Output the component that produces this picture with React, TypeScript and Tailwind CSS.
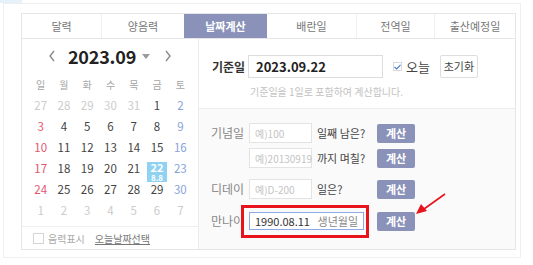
import React from "react";

const tabs = [
  { label: "달력", w: "w-[79px]" },
  { label: "양음력", w: "w-[83px]" },
  { label: "날짜계산", w: "w-[83px]", active: true },
  { label: "배란일", w: "w-[89px]" },
  { label: "전역일", w: "w-[78px]" },
  { label: "출산예정일", w: "w-[81px]" },
];

type Day = { d: number; o?: boolean; sel?: boolean };
const weeks: Day[][] = [
  [{ d: 27, o: true }, { d: 28, o: true }, { d: 29, o: true }, { d: 30, o: true }, { d: 31, o: true }, { d: 1 }, { d: 2 }],
  [{ d: 3 }, { d: 4 }, { d: 5 }, { d: 6 }, { d: 7 }, { d: 8 }, { d: 9 }],
  [{ d: 10 }, { d: 11 }, { d: 12 }, { d: 13 }, { d: 14 }, { d: 15 }, { d: 16 }],
  [{ d: 17 }, { d: 18 }, { d: 19 }, { d: 20 }, { d: 21 }, { d: 22, sel: true }, { d: 23 }],
  [{ d: 24 }, { d: 25 }, { d: 26 }, { d: 27 }, { d: 28 }, { d: 29 }, { d: 30 }],
  [{ d: 1, o: true }, { d: 2, o: true }, { d: 3, o: true }, { d: 4, o: true }, { d: 5, o: true }, { d: 6, o: true }, { d: 7, o: true }],
];
const weekdays = ["일", "월", "화", "수", "목", "금", "토"];

function dayColor(day: Day, i: number) {
  if (day.o) return "text-[#cccccc]";
  if (i === 0) return "text-[#e3566f]";
  if (i === 6) return "text-[#86a3da]";
  return "text-[#444]";
}

function CalcButton() {
  return (
    <div className="w-[38px] h-[19px] bg-[#8a92b9] text-white text-[11px] font-bold flex items-center justify-center rounded-[2px]">
      계산
    </div>
  );
}

export default function App() {
  return (
    <div className="w-[533px] h-[265px] bg-white relative overflow-hidden font-['Noto_Sans_CJK_KR','Noto_Sans',sans-serif]">
      <div className="absolute left-0 top-0 w-[22px] h-[3px] bg-[#e6f2fb]" />
      <div className="ml-[3px] mt-[3px] w-[518px] h-[255px] border border-[#efefef] pl-[17px] pt-[9px]">
        <div className="w-[495px] border border-[#e6e6e6]">
          {/* Tabs */}
          <div className="flex h-[25px] border-b border-[#e6e6e6]">
            {tabs.map((t, i) => (
              <div
                key={t.label}
                className={`${t.w} flex items-center justify-center text-[11px] ${
                  t.active
                    ? "bg-[#8a92b9] text-white font-bold"
                    : "text-[#777] bg-white"
                } ${i > 0 && !t.active && !tabs[i - 1].active ? "border-l border-[#f0f0f0]" : ""}`}
              >
                {t.label}
              </div>
            ))}
          </div>
          {/* Body */}
          <div className="flex h-[210px]">
            {/* Calendar */}
            <div className="w-[177px] border-r border-[#ececec] flex flex-col">
              <div className="h-[34px] flex items-center justify-center gap-[10px]">
                <svg width="8" height="12" viewBox="0 0 8 12" className="mr-[2px]">
                  <path d="M6 1 L2 6 L6 11" stroke="#8a8a8a" strokeWidth="1.4" fill="none" />
                </svg>
                <div className="flex items-center gap-[6px]">
                  <span className="text-[18px] font-bold text-[#222] tracking-[-0.2px] leading-none">2023.09</span>
                  <svg width="8" height="5" viewBox="0 0 8 5">
                    <path d="M0 0 L8 0 L4 5 Z" fill="#9a9a9a" />
                  </svg>
                </div>
                <svg width="8" height="12" viewBox="0 0 8 12" className="ml-[4px]">
                  <path d="M2 1 L6 6 L2 11" stroke="#8a8a8a" strokeWidth="1.4" fill="none" />
                </svg>
              </div>
              <div className="ml-[7px] w-[163px] grid grid-cols-7">
                {weekdays.map((w) => (
                  <div key={w} className="h-[22px] flex items-center justify-center text-[10px] text-[#a5a5a5]">
                    {w}
                  </div>
                ))}
                {weeks.map((wk, r) =>
                  wk.map((day, i) => (
                    <div
                      key={`${r}-${i}`}
                      className={`relative h-[21px] flex items-center justify-center text-[11.5px] leading-none ${dayColor(day, i)}`}
                    >
                      {day.sel ? (
                        <div className="absolute left-1/2 top-[4px] -translate-x-1/2 w-[20px] h-[20px] bg-[#8fd2f1] flex flex-col items-center justify-center text-white leading-none">
                          <span className="text-[11px] font-bold leading-none">22</span>
                          <span className="text-[8px] font-bold leading-none mt-[1px]">8.8</span>
                        </div>
                      ) : (
                        day.d
                      )}
                    </div>
                  ))
                )}
              </div>
              <div className="mt-[5px] border-t border-[#efefef] flex-1 flex items-center pl-[11px]">
                <div className="w-[11px] h-[11px] border border-[#d5d5d5] bg-white" />
                <span className="ml-[4px] text-[10px] text-[#aaa]">음력표시</span>
                <span className="ml-[10px] text-[10px] text-[#777] underline">오늘날짜선택</span>
              </div>
            </div>
            {/* Right panel */}
            <div className="flex-1 flex flex-col">
              <div className="h-[70px] border-b border-[#ececec] pl-[13px] pt-[16px]">
                <div className="flex items-center">
                  <span className="w-[36px] text-[12px] font-bold text-[#333]">기준일</span>
                  <div className="w-[135px] h-[23px] border border-[#dcdcdc] bg-white flex items-center pl-[7px] text-[13px] font-bold text-[#222]">
                    2023.09.22
                  </div>
                  <div className="ml-[10px] w-[9px] h-[9px] border border-[#d8d8d8] bg-white flex items-center justify-center">
                    <svg width="7" height="6" viewBox="0 0 7 6">
                      <path d="M0.5 3 L2.7 5 L6.5 0.8" stroke="#4a7fd6" strokeWidth="1.2" fill="none" />
                    </svg>
                  </div>
                  <span className="ml-[4px] text-[13px] text-[#444]">오늘</span>
                  <div className="ml-[10px] w-[38px] h-[23px] border border-[#dedede] bg-white rounded-[2px] flex items-center justify-center text-[11px] text-[#444]">
                    초기화
                  </div>
                </div>
                <div className="mt-[6px] ml-[38px] text-[10px] text-[#c2c2c2]">기준일을 1일로 포함하여 계산합니다.</div>
              </div>
              <div className="flex-1 bg-[#fafafa] pl-[12px] pt-[14px] relative">
                <div className="flex items-center h-[20px]">
                  <span className="w-[38px] text-[12px] text-[#888]">기념일</span>
                  <div className="w-[63px] h-[20px] border border-[#e3e3e3] bg-white flex items-center pl-[5px] text-[10px] text-[#c4c4c4]">
                    예)100
                  </div>
                  <span className="w-[65px] pl-[5px] text-[11px] text-[#444]">일째 남은?</span>
                  <CalcButton />
                </div>
                <div className="flex items-center h-[20px] mt-[5px]">
                  <span className="w-[38px]" />
                  <div className="w-[63px] h-[20px] border border-[#e3e3e3] bg-white flex items-center pl-[5px] text-[10px] text-[#c4c4c4]">
                    예)20130919
                  </div>
                  <span className="w-[65px] pl-[5px] text-[11px] text-[#444]">까지 며칠?</span>
                  <CalcButton />
                </div>
                <div className="flex items-center h-[20px] mt-[11px]">
                  <span className="w-[38px] text-[12px] text-[#888]">디데이</span>
                  <div className="w-[63px] h-[20px] border border-[#e3e3e3] bg-white flex items-center pl-[5px] text-[10px] text-[#c4c4c4]">
                    예)D-200
                  </div>
                  <span className="w-[65px] pl-[5px] text-[11px] text-[#444]">일은?</span>
                  <CalcButton />
                </div>
                <div className="flex items-center h-[20px] mt-[12px]">
                  <span className="w-[38px] text-[12px] text-[#888]">만나이</span>
                  <div className="relative w-[115px] h-[18px] border border-[#8fa9e6] bg-white flex items-center justify-between px-[5px] text-[11px]">
                    <span className="text-[#333]">1990.08.11</span>
                    <span className="text-[#888]">생년월일</span>
                    <div className="absolute left-[-9px] top-[-8px] w-[128px] h-[33px] border-[3px] border-[#e8141b]" />
                  </div>
                  <div className="ml-[13px]">
                    <CalcButton />
                  </div>
                </div>
              </div>
            </div>
          </div>
        </div>
      </div>
      {/* annotation arrow */}
      <svg className="absolute left-0 top-0 pointer-events-none" width="533" height="265">
        <line x1="445" y1="194" x2="424" y2="209" stroke="#e8141b" strokeWidth="1.6" />
        <path d="M416 214 L421 204 L427 211 Z" fill="#e8141b" />
      </svg>
    </div>
  );
}
